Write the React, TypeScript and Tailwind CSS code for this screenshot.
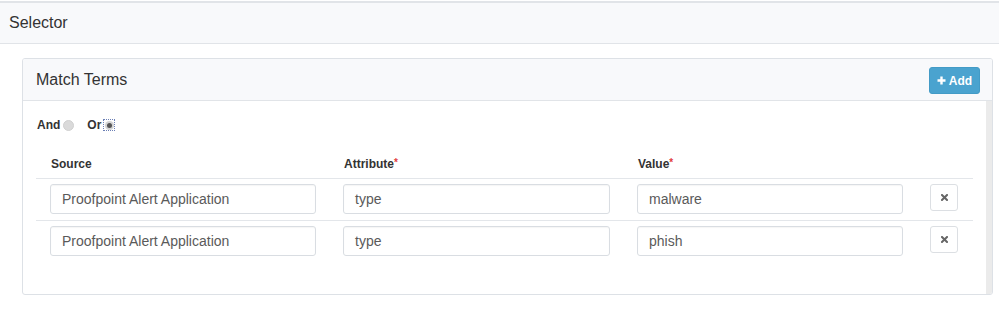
import React from "react";

const rows = [
  { source: "Proofpoint Alert Application", attribute: "type", value: "malware" },
  { source: "Proofpoint Alert Application", attribute: "type", value: "phish" },
];

function TextBox({ value }: { value: string }) {
  return (
    <div className="h-[30px] rounded-[3px] border border-[#d9dde2] bg-white pl-[11px] flex items-center text-[14px] text-[#5a5a5a] shadow-[inset_0_1px_1px_rgba(0,0,0,0.04)]">
      {value}
    </div>
  );
}

function RemoveButton() {
  return (
    <div className="w-[28px] h-[27px] rounded-[3px] border border-[#dcdfe3] bg-white flex items-center justify-center">
      <svg width="7" height="7" viewBox="0 0 7 7">
        <path d="M1 1L6 6M6 1L1 6" stroke="#666" strokeWidth="2" strokeLinecap="square" />
      </svg>
    </div>
  );
}

export default function App() {
  return (
    <div className="w-[999px] h-[311px] bg-white overflow-hidden" style={{ fontFamily: '"Liberation Sans", Arial, sans-serif' }}>
      {/* page header */}
      <div className="mt-[1px] border-t-2 border-b border-[#e1e4e8] bg-[#f8f9fb] h-[43px] flex items-center px-[9px]">
        <span className="text-[16px] text-[#333]">Selector</span>
      </div>

      {/* card */}
      <div className="mt-[14px] ml-[22px] w-[971px] h-[237px] rounded-[3px] border border-[#dde1e6] flex flex-col overflow-hidden">
        <div className="h-[42px] shrink-0 bg-[#f8f9fb] border-b border-[#e1e4e8] flex items-center justify-between pl-[13px] pr-[12px]">
          <span className="text-[16px] text-[#333]">Match Terms</span>
          <button className="mt-[2px] h-[27px] w-[51px] rounded-[3px] bg-[#4aa3cf] border border-[#439bc6] text-white text-[12px] font-bold flex items-center justify-center gap-[3px]">
            <svg width="9" height="9" viewBox="0 0 9 9">
              <path d="M4.5 0.5V8.5M0.5 4.5H8.5" stroke="#fff" strokeWidth="2.4" />
            </svg>
            Add
          </button>
        </div>

        <div className="flex flex-1">
          <div className="flex-1 pl-[13px] pr-[13px]">
            {/* and / or */}
            <div className="mt-[14px] h-[20px] flex items-center text-[12px] font-bold text-[#333]">
              <span className="ml-[1px]">And</span>
              <span className="ml-[3px] w-[11px] h-[11px] rounded-full bg-[#dadada] border border-[#d0d0d0]"></span>
              <span className="ml-[13px]">Or</span>
              <span className="ml-[2px] w-[12px] h-[12px] border border-dotted border-[#6b7fb5] flex items-center justify-center">
                <span className="w-[9px] h-[9px] rounded-full bg-[#d4d4d4] flex items-center justify-center">
                  <span className="w-[5px] h-[5px] rounded-full bg-[#555]"></span>
                </span>
              </span>
            </div>

            {/* table */}
            <div className="mt-[14px]">
              <div className="h-[30px] grid grid-cols-[266px_267px_266px_28px] gap-x-[27px] pl-[14px] items-end pb-[5px] border-b border-[#e3e6ea] text-[12px] font-bold text-[#333]">
                <span className="pl-[1px]">Source</span>
                <span className="pl-[1px]">
                  Attribute<span className="text-[#e23b3b] text-[10px] align-top">*</span>
                </span>
                <span className="pl-[1px]">
                  Value<span className="text-[#e23b3b] text-[10px] align-top">*</span>
                </span>
                <span></span>
              </div>
              {rows.map((row, i) => (
                <div
                  key={i}
                  className={
                    "grid grid-cols-[266px_267px_266px_28px] gap-x-[27px] pl-[14px] pt-[5px] pb-[6px] items-start " +
                    (i === 0 ? "border-b border-[#e3e6ea]" : "")
                  }
                >
                  <TextBox value={row.source} />
                  <TextBox value={row.attribute} />
                  <TextBox value={row.value} />
                  <RemoveButton />
                </div>
              ))}
            </div>
          </div>
          <div className="w-[6px] bg-[#ebebeb]"></div>
        </div>
      </div>
    </div>
  );
}
